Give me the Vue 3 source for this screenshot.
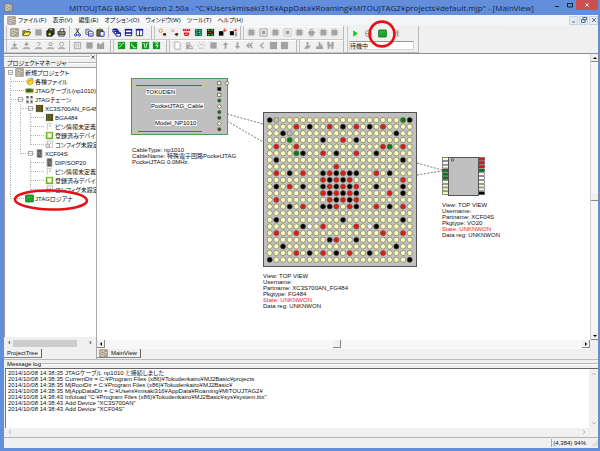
<script setup>
const menus = ['ファイル(F)', '表示(V)', '編集(E)', 'オプション(O)', 'ウィンドウ(W)', 'ツール(T)', 'ヘルプ(H)']

/* Icon artwork, drawn on a 10 x 10 grid */
const G = '#a2a2a2'
const chipBody = (inner) =>
  `<path d="M2.5 0.5v9M4.5 0.5v9M6.5 0.5v9M0.5 3h9M0.5 5h9M0.5 7h9" stroke="#c6c6c6" fill="none"/><rect x="2" y="2" width="6" height="6" fill="${G}"/>${inner}`
const greenBox = (inner) => `<rect x="1" y="1" width="8" height="8" fill="#0a9a18"/><g stroke="#c8f5c0" fill="none">${inner}</g>`
const stamp = (top) => `<g fill="${G}" stroke="${G}"><path d="M1 8.5h8" /><path d="M2 7h6v1H2z" stroke="none"/>${top}</g>`
const board = (bg, a, b) =>
  `<rect x="1" y="1" width="8" height="8" fill="${bg}" stroke="#77705f"/><path d="M2.5 3.5h2M6 2.5h2M3 6.5h2M6.5 5.5h2" stroke="${a}" fill="none"/><path d="M4.500 4.500h2M2 5.500h1M5.500 7.500h2" stroke="${b}" fill="none"/>`

const icons = {
  project: board('#e4ddcf', '#8a5f4c', '#4f7358'),
  open: '<path d="M1 8V3h3l1 1h3v1" fill="#c9b000" stroke="#4a4200" stroke-width=".8"/><path d="M1 8.500l2-4h6.500l-2 4z" fill="#fff04a" stroke="#3a3600" stroke-width=".8"/><path d="M6 2q1.500-1.500 3 .5" stroke="#222" fill="none" stroke-width=".7"/>',
  block: `<rect x="1.500" y="1.500" width="7" height="7" fill="${G}"/>`,
  saveAll: '<path d="M3 1h6v6H3z" fill="#626200" stroke="#111"/><path d="M1 3h6v6H1z" fill="#444800" stroke="#111"/><path d="M3 6h2v2H3z" fill="#fff"/><path d="M4 2h3" stroke="#eee"/>',
  print: '<path d="M3 4l1-3h4L7 4" fill="#fff" stroke="#222" stroke-width=".8"/><path d="M1 4h8v3H1z" fill="#8a8a8a" stroke="#222" stroke-width=".8"/><path d="M2 7h6v2H2z" fill="#ddd" stroke="#222" stroke-width=".8"/><path d="M6 6h1" stroke="#ee0"/>',
  cut: '<path d="M3.500 0.500L6.500 6M6.500 0.500L3.500 6" stroke="#223" fill="none"/><g fill="none" stroke="#18249c"><circle cx="3" cy="7.700" r="1.300"/><circle cx="7" cy="7.700" r="1.300"/></g>',
  copy: '<path d="M1 1.500h3.500l1 1V7H1z" fill="#fff" stroke="#333a80" stroke-width=".9"/><path d="M4 3.500h4l1 1V9H4z" fill="#fff" stroke="#10189c" stroke-width=".9"/><path d="M2 3.500h1.500M2 5h1.500M5 6h3M5 7.500h3" stroke="#445" stroke-width=".6"/>',
  paste: '<path d="M1 2h6.500v7H1z" fill="#77743a" stroke="#222" stroke-width=".9"/><path d="M3 1h2.500v1.500H3z" fill="#ee0" stroke="#222" stroke-width=".6"/><path d="M4.500 4h4.500v5H4.500z" fill="#fff" stroke="#10189c" stroke-width=".9"/>',
  cascade: '<g fill="#fff" stroke="#08128c"><path d="M1 1.500h5v3H1z"/><path d="M2.500 3.500h5v3h-5z"/><path d="M4.500 5.500h5v3.500h-5z"/></g><path d="M1 1.500h5M2.500 3.500h5M4.500 5.700h5" stroke="#08128c" stroke-width="1.500"/>',
  tileH: '<path d="M1.500 1.500h7v7h-7z" fill="#fff" stroke="#08128c"/><path d="M1 2h8M1 5.500h8" stroke="#08128c" stroke-width="1.500"/>',
  tileV: '<path d="M1.500 1.500h7v7h-7zM5 1.500v7" fill="#fff" stroke="#08128c" stroke-width=".9"/><path d="M1 2h8" stroke="#08128c" stroke-width="1.500"/>',
  link: '<circle cx="3" cy="3" r="1.800" fill="#fff" stroke="#ff6820"/><path d="M5 7l2-1.500 2 .5v2L7 9z" fill="#222"/><path d="M6 8.500L8 9" stroke="#cc0"/>',
  unlink: '<path d="M1.500 1.500l3 3M4.500 1.500l-3 3" stroke="#ff8050"/><path d="M5 7l2-1.500 2 .5v2L7 9z" fill="#222"/><path d="M6 8.500L8 9" stroke="#cc0"/>',
  reset: '<path d="M1 1h8v2.500H1z" fill="#e5141d"/><path d="M2 2h1M4.500 2h1M7 2h1" stroke="#fff"/><path d="M2 5h6v1.500L7 9H3L2 6.500z" fill="#e5141d"/><path d="M3.500 7h3" stroke="#fff" stroke-width=".7"/>',
  scanA: '<path d="M1 1h8v8H1z" fill="#08813c"/><path d="M2 2.500h2M5.500 3h2M3 5h4M2 7h2M6 7.500h2" stroke="#8bcdf2"/><path d="M4.500 2v6" stroke="#062f20"/>',
  scanB: '<path d="M1 1h8v8H1z" fill="#13300f"/><path d="M2 2.500h2M6 2.500h2M2 7.500h2M6 7.500h2" stroke="#44c82c" stroke-width="1.500"/><path d="M4 5h2M2 5h1" stroke="#c83c28"/>',
  addChip: '<path d="M1 3.500h5V8.500H1z" fill="#090909"/><path d="M7.500 0.500v4M5.500 2.500h4" stroke="#e22"/>',
  moveChip: '<path d="M1 3.500h4.500V8H1z" fill="#090909"/><path d="M5 2.500h4M7.500 1v3" stroke="#e22"/><path d="M6.500 5.500h2.500M6.500 7h2.500M6.500 8.700h2.500" stroke="#777"/>',
  chip: chipBody(''),
  chipFrame: `<path d="M1 1h8v8H1z" stroke="${G}" fill="none"/><path d="M3 3h4v4H3z" fill="${G}"/>`,
  chipDot: `<path d="M1 1h8v8H1z" stroke="${G}" stroke-dasharray="1 1" fill="none"/><path d="M3 3h4v4H3z" fill="${G}"/>`,
  chipTall: `<path d="M2 3h6v5H2z" fill="${G}"/><path d="M3 1.500h4M1 5h8M3 9h4" stroke="${G}"/>`,
  down: stamp('<path d="M5 1v3M3 4h4L5 6.500z"/>'),
  up: stamp('<path d="M5 6V3M3 4h4L5 1.500z"/>'),
  ask: stamp('<path d="M3 2.500q2-2 4 0q0 1.500-2 2v1.500" fill="none"/>'),
  ring: stamp('<path d="M3.500 2h3v3h-3z" fill="none"/>'),
  oval: stamp('<circle cx="5" cy="3.500" r="2.200" fill="none"/>'),
  sheet: `<path d="M1.500 1.500h7v7h-7z" stroke="${G}" fill="none"/><path d="M3 3.500h4M3 5.500h4M3.500 3v5M6 3v5" stroke="#bbb" stroke-width=".7"/>`,
  folder: `<path d="M1 3l2-1 2 2 3-3 1 1v7H1z" fill="${G}"/>`,
  waveA: greenBox('<path d="M2 7l2-1 1-2 3-2M2 3h2"/>'),
  waveB: greenBox('<path d="M3 2.500v3h2v2h3"/>'),
  waveC: greenBox('<path d="M2 3h2v4h2V3h2"/>'),
  waveD: greenBox('<path d="M3 2h4L4 5h3L5 8"/>'),
  page: `<path d="M2 1h4l2 2v6H2z" fill="#fff" stroke="${G}" stroke-width=".9"/>`,
  steps: `<path d="M1 8.500h8M2 8V2h3v2h1v2h2v2" stroke="${G}" fill="none"/><path d="M2 4h3v4H2z" fill="${G}"/>`,
  gear: `<path d="M2 2h1M7 2h1M1 5h1M8 5h1M4 4h2M2 8h1M4 8h2M7 8h1" stroke="${G}"/>`,
  arrowUp: `<path d="M5 1L8 4.500H6V8.500H4V4.500H2z" fill="${G}"/>`,
  arrowDown: `<path d="M5 9L2 5.500h2V1.500h2v4h2z" fill="${G}"/>`,
  left2: `<path d="M5 2L2 5l3 3M8.500 2L5 5l3.500 3M2 5h6" stroke="${G}" stroke-width="1.300" fill="none"/>`,
  left1: `<path d="M7.500 2L3.500 5l4 3" stroke="${G}" stroke-width="1.400" fill="none"/>`,
  big: `<path d="M1 1h8v8H1z" fill="${G}"/>`,
  bootA: `<path d="M4 1h2v4h3L6 8.500H1L4 5z" fill="${G}"/>`,
  bootB: `<path d="M4 1h2v3h2v2h1v3H1V6h3z" fill="${G}"/>`,
  bootC: `<path d="M1.500 1H4v3h2V1h2.500v3L8 9H6V6H4v3H2L1.500 4z" fill="${G}"/>`,
  play: '<path d="M2.500 1.500L7.500 5l-5 3.500z" fill="#12c421"/>',
  stop: `<circle cx="5" cy="5" r="3.300" fill="none" stroke="${G}" stroke-width="1.300"/><path d="M2.500 5h5" stroke="${G}"/>`,
  analyzer: '<path d="M0.500 2q0-1 1-1h7q1 0 1 1v6q0 1-1 1h-7q-1 0-1-1z" fill="#1ea02c" stroke="#12751d" stroke-width=".8"/><path d="M2 3.500h6" stroke="#53c95b" stroke-width=".7"/>',
  bars: '<path d="M2 1h6v8H2z" fill="#cfcfcf"/><path d="M6 2v6M4 4h3" stroke="#999"/>',
  files: '<path d="M1 5l4-4 2 2-2 4z" fill="#ffe14a" stroke="#a87d00" stroke-width=".6"/><path d="M3 8l1-4 5-1v4L5 9z" fill="#ffd21d" stroke="#a87d00" stroke-width=".6"/><path d="M6 1.500h2.500v2" fill="none" stroke="#7892c8"/>',
  cable: '<path d="M0.500 3h9v4h-9z" fill="#6f7d12"/><path d="M2 3h5v4H2z" fill="#2e6a17"/><path d="M1 7.500h8" stroke="#aaa550"/>',
  chain: '<path d="M1.500 1h2.500v2.500H1.500zM6 1h2.500v2.500H6zM1.500 6H4v2.500H1.500zM6 6h2.500v2.500H6z" fill="#555"/><path d="M1 4.500h8M1 9.300h8" stroke="#aaa" stroke-width=".6"/>',
  bga: '<path d="M1 1h8v8H1z" fill="#4c4b16"/><path d="M2 2.500h6M2 4.500h6M2 6.500h6M2 8.200h6" stroke="#b0a654" stroke-dasharray="1 1" stroke-width=".8"/>',
  dip: '<path d="M2 0.500h6v9H2z" fill="#595c57"/><path d="M2 2h1M2 4h1M2 6h1M2 8h1M7 2h1M7 4h1M7 6h1M7 8h1" stroke="#c9d0b8"/><path d="M4 3l2 4" stroke="#999"/>',
  pins: '<path d="M2.500 9V1.500H8M4.500 3.500H7M4.500 5h2" stroke="#bbb" fill="none" stroke-width=".9"/>',
  db: '<path d="M1 1h8v8H1z" fill="#9ed345"/><path d="M3 3h4v4H3z" fill="#fffde5"/><path d="M1.500 1.500h7v7h-7z" fill="none" stroke="#5ca629"/><path d="M2.500 2.500h5" stroke="#e3f5a0"/>',
  config: '<path d="M2.500 1h6v7h-6z" fill="#fff" stroke="#aaa" stroke-width=".8"/><path d="M1 4.500h4v4H1z" fill="#ddd" stroke="#999" stroke-width=".7"/><path d="M4 6l3-3" stroke="#c99"/>'
}

const rowOne = [
  { k: 'file', sets: [['project', 'open', 'block', 'saveAll', 'print'], ['cut', 'copy', 'paste'], ['cascade', 'tileH', 'tileV']] },
  { k: 'scan', sets: [['link', 'unlink', 'reset', 'scanA', 'scanB', 'addChip', 'moveChip']] },
  { k: 'chips', sets: [['chip', 'chipFrame', 'chip', 'chipDot', 'chip', 'chipTall', 'chip', 'chip']] }
]
const rowTwo = [
  { k: 'stamp', sets: [['down', 'up', 'ask', 'ring', 'oval'], ['sheet', 'block', 'folder']] },
  { k: 'wave', sets: [['waveA', 'waveB', 'waveC', 'waveD']] },
  { k: 'edit', sets: [['page', 'steps', 'gear', 'block', 'arrowUp', 'arrowDown', 'left2', 'left1', 'big', 'big']] },
  { k: 'boot', sets: [['bootA', 'bootB', 'bootC']] }
]

/* through: guide columns that run the full row; half: the column that ends here */
const tree = [
  { level: 0, icon: 'project', text: '新規プロジェクト', open: true, through: [], half: -1 },
  { level: 1, icon: 'files', text: '各種ファイル', through: [0], half: -1 },
  { level: 1, icon: 'cable', text: 'JTAGケーブル(np1010)', through: [0], half: -1 },
  { level: 1, icon: 'chain', text: 'JTAGチェーン', open: true, through: [0], half: -1 },
  { level: 2, icon: 'bga', text: 'XC3S700AN_FG484', open: true, through: [0, 1], half: -1 },
  { level: 3, icon: 'bga', text: 'BGA484', through: [0, 1, 2], half: -1 },
  { level: 3, icon: 'pins', text: 'ピン情報未定義', through: [0, 1, 2], half: -1 },
  { level: 3, icon: 'db', text: '登録済みデバイス', through: [0, 1, 2], half: -1 },
  { level: 3, icon: 'config', text: 'コンフィグ未設定', through: [0, 1], half: 2 },
  { level: 2, icon: 'dip', text: 'XCF04S', open: true, through: [0], half: 1 },
  { level: 3, icon: 'dip', text: 'DIP/SOP20', through: [0, 2], half: -1 },
  { level: 3, icon: 'pins', text: 'ピン情報未定義', through: [0, 2], half: -1 },
  { level: 3, icon: 'db', text: '登録済みデバイス', through: [0, 2], half: -1 },
  { level: 3, icon: 'config', text: 'コンフィグ未設定', through: [0], half: 2 },
  { level: 1, icon: 'analyzer', text: 'JTAGロジアナ', through: [], half: 0, marked: true }
]

/* Ball map: k = ground, r = power, g = JTAG, n = unconnected, w = configuration */
const special = {
  0: { k: [0, 21], n: [1], g: [20] },
  1: { r: [4, 9, 13, 17], k: [6, 11, 15] },
  2: { k: [2, 19], n: [3] },
  3: { g: [3], k: [8, 13], r: [11] },
  4: { r: [1, 4, 17, 20], g: [18] },
  5: { g: [4], k: [5, 10, 16], r: [8, 13] },
  6: { k: [1, 20] },
  7: { r: [10] },
  8: { r: [1, 5, 9, 11, 16], k: [3, 8, 10, 12, 13, 18] },
  9: { r: [8, 10, 12, 20], k: [9, 11] },
  10: { k: [1, 5, 8, 10, 12, 16, 20], r: [3, 9, 11, 13] },
  11: { r: [8, 10, 12, 18], k: [9, 11, 13, 20] },
  12: { r: [1, 9, 11, 13], k: [10, 12] },
  13: { k: [3, 8, 9, 13, 18], r: [5, 10, 12, 16, 20] },
  15: { k: [1, 11, 20], w: [7] },
  16: { k: [5, 16], w: [6, 15], r: [8, 13] },
  17: { r: [1, 4, 17, 20] },
  18: { k: [9, 13], r: [10] },
  19: { k: [2, 19] },
  20: { r: [4, 8, 12, 17], k: [6, 10, 15] },
  21: { k: [0, 21] }
}
const fills = { k: '#000', r: '#e01818', g: '#0c7a14', n: '#c0c0c0', w: '#fff', y: '#ffffc4' }
const balls = []
for (let r = 0; r < 22; r++) {
  for (let c = 0; c < 22; c++) {
    const kind = Object.keys(special[r] || {}).find((t) => special[r][t].includes(c)) || 'y'
    balls.push({ id: r * 22 + c, x: 172.7 + (c * 140) / 21, y: 66 + (r * 139.7) / 21, kind })
  }
}

const boardPins = [
  ['s', '#ffffc4'], ['s', '#000'], ['s', '#ffffc4'], ['c', '#1c6b22'], ['d', '#ffffc4'],
  ['c', '#1c6b22'], ['c', '#1c6b22'], ['d', '#ffffc4'], ['c', '#1c6b22']
].map(([shape, fill], i) => ({ shape, fill, y: 29.3 + i * 5.75 }))

const sopLeft = ['#ffffc4', '#fff', '#fff', '#0c7a14', '#0c7a14', '#0c7a14', '#fff', '#ffffc4', '#ffffc4', '#ffffc4']
const sopRight = ['#e01818', '#e01818', '#e01818', '#0c7a14', '#fff', '#fff', '#fff', '#ffffc4', '#fff', '#000']

const captions = [
  { x: 35, y: 98, lines: ['CableType: np1010', 'CableName: 特殊電子回路PocketJTAG', 'PocketJTAG 0.0MHz.'] },
  { x: 166, y: 224, lines: ['View: TOP VIEW', 'Username:', 'Partname: XC3S700AN_FG484', 'Pkgtype: FG484', 'State: UNKNWON', 'Data reg: UNKNWON'] },
  { x: 345, y: 153, lines: ['View: TOP VIEW', 'Username:', 'Partname: XCF04S', 'Pkgtype: VO20', 'State: UNKNWON', 'Data reg: UNKNWON'] }
]

const log = [
  ['2014/10/08 14:38:35', 'JTAGケーブル np1010 と接続しました'],
  ['2014/10/08 14:38:35', 'CurrentDir = C:¥Program Files (x86)¥Tokudenkairo¥MJ2Basic¥projects'],
  ['2014/10/08 14:38:35', 'MjRootDir = C:¥Program Files (x86)¥Tokudenkairo¥MJ2Basic¥'],
  ['2014/10/08 14:38:35', 'MjAppDataDir = C:¥Users¥misaki316¥AppData¥Roaming¥MITOUJTAG2¥'],
  ['2014/10/08 14:38:43', 'Infoload "C:¥Program Files (x86)¥Tokudenkairo¥MJ2Basic¥sys¥system.bix"'],
  ['2014/10/08 14:38:43', 'Add Device "XC3S700AN"'],
  ['2014/10/08 14:38:43', 'Add Device "XCF04S"']
]
</script>

<template>
  <div class="window">
    <header class="titlebar">
      <svg class="icon" viewBox="0 0 10 10" v-html="icons.project"></svg>
      <h1>MITOUJTAG BASIC Version 2.50a - "C:¥Users¥misaki316¥AppData¥Roaming¥MITOUJTAG2¥projects¥default.mjp" - [MainView]</h1>
      <div class="winbtns">
        <button type="button" aria-label="Minimize"><svg viewBox="0 0 8 8"><path d="M2 5.500h4" /></svg></button>
        <button type="button" aria-label="Maximize"><svg viewBox="0 0 8 8"><path d="M1.500 2.500h5v3.500h-5zM1 2.500h6" /></svg></button>
        <button type="button" aria-label="Close" class="close"><svg viewBox="0 0 8 8"><path d="M2.500 2.500l3 3M5.500 2.500l-3 3" /></svg></button>
      </div>
    </header>

    <div class="frame">
      <nav class="menubar">
        <svg class="icon" viewBox="0 0 10 10" v-html="icons.project"></svg>
        <div class="menus">
          <button v-for="m in menus" :key="m" type="button">{{ m }}</button>
        </div>
        <div class="mdibtns">
          <button type="button" aria-label="Minimize view"><svg viewBox="0 0 8 8"><path d="M2 6h3" /></svg></button>
          <button type="button" aria-label="Restore view"><svg viewBox="0 0 8 8"><path d="M3 1.500h3.500V4H3zM1.500 3.500H5V6.500H1.500z" /></svg></button>
          <button type="button" aria-label="Close view"><svg viewBox="0 0 8 8"><path d="M2 2l4 4M6 2L2 6" /></svg></button>
        </div>
      </nav>

      <div class="toolbars">
        <div class="bars">
          <div v-for="(row, ri) in [rowOne, rowTwo]" :key="ri" class="bar-row">
            <div v-for="g in row" :key="g.k" class="group" :class="g.k">
              <div v-for="(set, si) in g.sets" :key="si" class="set">
                <button v-for="(ic, ii) in set" :key="ii" type="button" class="tool" :aria-label="ic">
                  <svg viewBox="0 0 10 10" v-html="icons[ic]"></svg>
                </button>
              </div>
            </div>
          </div>
        </div>
        <div class="run">
          <div class="run-tools">
            <button type="button" class="tool" aria-label="play"><svg viewBox="0 0 10 10" v-html="icons.play"></svg></button>
            <button type="button" class="tool" aria-label="stop"><svg viewBox="0 0 10 10" v-html="icons.stop"></svg></button>
            <button type="button" class="tool marked" aria-label="analyzer">
              <svg viewBox="0 0 10 10" v-html="icons.analyzer"></svg>
              <svg class="ring" viewBox="0 0 28 28"><circle cx="14" cy="14" r="12.400" /></svg>
            </button>
            <button type="button" class="tool" aria-label="bars"><svg viewBox="0 0 10 10" v-html="icons.bars"></svg></button>
          </div>
          <input class="state" type="text" value="待機中" aria-label="status" readonly />
        </div>
      </div>

      <main class="work">
        <aside class="side">
          <div class="grip"><i></i><button type="button" aria-label="Close panel"><svg viewBox="0 0 6 6"><path d="M1.500 1.500l3 3M4.500 1.500l-3 3" /></svg></button></div>
          <div class="caption"><span>プロジェクトマネージャ</span><i></i></div>
          <ul class="tree">
            <li v-for="(n, i) in tree" :key="i">
              <svg class="guide" :width="9 + n.level * 10" height="9">
                <g class="dots">
                  <path v-for="c in n.through" :key="c" :d="`M${4.5 + c * 10} 0v9`" />
                  <path v-if="n.half >= 0" :d="`M${4.5 + n.half * 10} 0v5`" />
                  <path v-if="n.level" :d="`M${n.level * 10 - 5} 4.500h${n.open ? 14 : 13}`" />
                </g>
                <g v-if="n.open" class="box">
                  <rect :x="2.5 + n.level * 10" y="2.500" width="4" height="4" />
                  <path :d="`M${3.5 + n.level * 10} 4.500h2`" />
                </g>
              </svg>
              <svg class="icon" viewBox="0 0 10 10" v-html="icons[n.icon]"></svg>
              <span>{{ n.text }}</span>
              <svg v-if="n.marked" class="oval" viewBox="0 0 76 24"><ellipse cx="38" cy="12" rx="36" ry="9.500" transform="rotate(1 38 12)" /></svg>
            </li>
          </ul>
          <div class="flat-scroll"><b>‹</b><i></i><b>›</b></div>
          <div class="tabs"><button type="button" class="tab">ProjectTree</button></div>
        </aside>

        <section class="view">
          <div class="stage">
            <div class="canvas">
              <svg class="drawing">
                <g class="wires">
                  <path d="M130 60L166 70M130 67L166 88M320 109L345 116M320 121L345 117" />
                </g>

                <rect class="pcb" x="34.500" y="24.500" width="96" height="56" />
                <path class="silk" d="M39 31.500h66M41 77.500h64" />
                <path class="faint" d="M42 73.500h58" />
                <g class="plates">
                  <rect x="49" y="35" width="30" height="6" />
                  <rect x="54" y="49" width="53" height="6" />
                  <rect x="58" y="66" width="42" height="6" />
                </g>
                <g class="note">
                  <text x="49" y="40">TOKUDEN</text>
                  <text x="54" y="54">PocketJTAG_Cable</text>
                  <text x="58" y="71">Model_NP1010</text>
                </g>
                <g class="pads">
                  <template v-for="(p, i) in boardPins" :key="i">
                    <rect v-if="p.shape === 's'" x="120.700" :y="p.y - 1.6" width="3.200" height="3.200" :fill="p.fill" />
                    <circle v-else-if="p.shape === 'c'" cx="122.300" :cy="p.y" r="1.600" :fill="p.fill" />
                    <path v-else :d="`M122.300 ${p.y - 2}l2 2l-2 2l-2-2z`" :fill="p.fill" />
                  </template>
                  <circle cx="130" cy="29.300" r="1.700" fill="#ffffc4" />
                </g>

                <rect class="body" x="166.500" y="58.500" width="153" height="154" />
                <circle v-for="b in balls" :key="b.id" class="ball" :cx="b.x" :cy="b.y" r="2.600" :fill="fills[b.kind]" />

                <g class="pads">
                  <rect v-for="(f, i) in sopLeft" :key="'l' + i" x="345.500" :y="103.6 + i * 3.8" width="6" height="2.800" :fill="f" />
                  <rect v-for="(f, i) in sopRight" :key="'r' + i" x="381.500" :y="103.6 + i * 3.8" width="6" height="2.800" :fill="f" />
                </g>
                <rect class="body" x="351.500" y="103.500" width="30" height="38" />
                <circle class="mark" cx="355.500" cy="106" r="1.200" />

                <g v-for="cap in captions" :key="cap.x" class="note">
                  <text v-for="(t, i) in cap.lines" :key="t" :x="cap.x" :y="cap.y + i * 6" :class="{ alert: t.startsWith('State') }">{{ t }}</text>
                </g>
              </svg>
            </div>
            <div class="vscroll">
              <button type="button" aria-label="Scroll up"><svg viewBox="0 0 6 6"><path d="M1 4h4L3 2z" /></svg></button>
              <i class="thumb"></i>
              <button type="button" aria-label="Scroll down"><svg viewBox="0 0 6 6"><path d="M1 2h4L3 4z" /></svg></button>
            </div>
          </div>
          <div class="hscroll">
            <button type="button" aria-label="Scroll left"><svg viewBox="0 0 6 6"><path d="M4 1v4L2 3z" /></svg></button>
            <i class="before"></i><i class="thumb"></i><i class="after"></i>
            <button type="button" aria-label="Scroll right"><svg viewBox="0 0 6 6"><path d="M2 1v4l2-2z" /></svg></button>
            <i class="corner"></i>
          </div>
          <div class="tabs"><button type="button" class="tab"><svg class="icon" viewBox="0 0 10 10" v-html="icons.project"></svg>MainView</button></div>
        </section>
      </main>

      <section class="messages">
        <div class="caption"><span>Message log</span><i></i></div>
        <div class="logbox">
          <div class="log">
            <p v-for="(l, i) in log" :key="i"><time>{{ l[0] }}</time><span>{{ l[1] }}</span></p>
          </div>
          <div class="log-v"><svg viewBox="0 0 6 6"><path d="M1 4l2-2 2 2" /></svg><svg viewBox="0 0 6 6"><path d="M1 2l2 2 2-2" /></svg></div>
        </div>
        <div class="log-h"><svg viewBox="0 0 6 6"><path d="M4 1L2 3l2 2" /></svg><svg viewBox="0 0 6 6"><path d="M2 1l2 2-2 2" /></svg></div>
      </section>

      <footer class="status">
        <span>(4,384) 94%</span>
        <svg viewBox="0 0 8 8"><path d="M1 8l7-7M4 8l4-4M7 8l1-1" /></svg>
      </footer>
    </div>
  </div>
</template>

<style>
body {
  margin: 0;
}
</style>

<style scoped>
* {
  box-sizing: border-box;
}
.window {
  display: flex;
  flex-direction: column;
  height: 100vh;
  padding: 0 2px 3px 4px;
  background: #638edb;
  color: #111;
  font-family: 'Liberation Sans', 'Noto Sans CJK JP', sans-serif;
  font-feature-settings: 'palt';
  font-size: 6px;
  line-height: 8px;
  overflow: hidden;
}
button {
  border: 0;
  padding: 0;
  margin: 0;
  background: none;
  font: inherit;
  color: inherit;
  display: flex;
  align-items: center;
  justify-content: center;
}
svg {
  display: block;
  flex: none;
}
.icon {
  width: 9px;
  height: 9px;
}
.titlebar {
  display: flex;
  height: 15px;
  flex: none;
}
.titlebar .icon {
  margin: 3px 0 0;
}
h1 {
  flex: 1;
  margin: 0;
  padding-left: 40px;
  text-align: center;
  font: 400 8px/16px 'Open Sans', 'Noto Sans CJK JP', sans-serif;
  color: #15254a;
  white-space: nowrap;
}
.winbtns {
  display: flex;
}
.winbtns button {
  width: 13px;
  height: 10px;
}
.winbtns .close {
  width: 22px;
  background: #c9504f;
}
.winbtns svg,
.mdibtns svg {
  width: 8px;
  height: 8px;
  fill: none;
  stroke: #1a2440;
}
.winbtns .close svg {
  stroke: #fff;
}
.frame {
  flex: 1;
  min-height: 0;
  display: flex;
  flex-direction: column;
  background: #f0f0f0;
}
.menubar {
  display: flex;
  align-items: center;
  height: 10px;
  flex: none;
  padding: 0 0 0 3px;
  background: linear-gradient(90deg, #f8f9fb, #f3f4f6);
}
.menus {
  flex: 1;
  display: flex;
  gap: 6px;
  padding-left: 2px;
}
.menus button {
  white-space: nowrap;
}
.mdibtns {
  display: flex;
  gap: 1px;
}
.mdibtns button {
  width: 9px;
  height: 9px;
  background: #e4ecf7;
  border: 1px solid #c4d2e6;
}
.mdibtns svg {
  stroke: #5b6b84;
}
.toolbars {
  display: flex;
  height: 29px;
  flex: none;
  border-bottom: 1px solid #8e8e8e;
  padding-top: 1px;
}
.bars {
  width: 340px;
  display: flex;
  flex-direction: column;
}
.bar-row {
  flex: 1;
  display: flex;
}
.group {
  display: flex;
  align-items: center;
  padding: 0 2px 0 5px;
  border-right: 1px solid #b9b9b9;
  border-bottom: 1px solid #c9c9c9;
  box-shadow: inset 2px 0 #f0f0f0, inset 3px 0 #c0c0c0, inset 0 1px #fff;
}
.file {
  width: 148px;
}
.scan {
  width: 89px;
}
.chips {
  flex: 1;
}
.stamp {
  width: 107px;
}
.wave {
  width: 56px;
}
.edit {
  width: 130px;
}
.boot {
  flex: 1;
}
.set {
  display: flex;
}
.set + .set {
  border-left: 1px solid #bdbdbd;
  margin-left: 2px;
  padding-left: 2px;
}
.tool {
  width: 12px;
  height: 12px;
}
.set .tool:first-child,
.set .tool:last-child {
  width: 11px;
}
.tool > svg {
  width: 9px;
  height: 9px;
}
.run {
  width: 75px;
  padding: 0 4px 2px 5px;
  border-right: 1px solid #b9b9b9;
  border-bottom: 1px solid #b9b9b9;
  box-shadow: inset 3px 0 #f0f0f0, inset 4px 0 #c8c8c8;
}
.run-tools {
  display: flex;
  align-items: center;
  gap: 1px;
  height: 15px;
}
.marked {
  position: relative;
}
.run-tools .marked {
  width: 14px;
}
.tool > .ring {
  position: absolute;
  z-index: 2;
  left: -7px;
  top: -8px;
  width: 28px;
  height: 28px;
}
.ring,
.oval {
  fill: none;
  stroke: #e60f16;
  stroke-width: 2.600px;
  pointer-events: none;
}
.state {
  display: block;
  width: 100%;
  height: 9px;
  border: 1px solid #d5d5d5;
  border-top-color: #999;
  padding: 0;
  background: #fff;
  color: #111;
  font: inherit;
}
.work {
  flex: 1;
  min-height: 0;
  display: flex;
}
.side {
  width: 93px;
  display: flex;
  flex-direction: column;
  border-right: 1px solid #a9a9a9;
}
.grip {
  display: flex;
  align-items: center;
  height: 5px;
  flex: none;
}
.grip i,
.caption i {
  flex: 1;
  height: 2px;
  border-top: 1px solid #b4b4b4;
  border-bottom: 1px solid #fff;
}
.grip button {
  width: 6px;
  height: 5px;
}
.grip svg {
  width: 6px;
  height: 6px;
  stroke: #333;
  stroke-width: 0.800px;
}
.caption {
  display: flex;
  align-items: center;
  gap: 1px;
  height: 8px;
  flex: none;
  padding-left: 3px;
  white-space: nowrap;
}
.tree {
  flex: 1;
  min-height: 0;
  list-style: none;
  margin: 0;
  padding: 0 0 0 1px;
  background: #fff;
  border-left: 1px solid #999;
  border-top: 1px solid #999;
  overflow: hidden;
}
.tree li {
  position: relative;
  display: flex;
  align-items: center;
  height: 9px;
  white-space: nowrap;
}
.tree .icon {
  margin-right: 1px;
}
.dots {
  fill: none;
  stroke: #b5b5b5;
  stroke-dasharray: 1 1;
}
.box {
  fill: #fff;
  stroke: #979797;
  stroke-width: 0.800px;
}
.oval {
  position: absolute;
  z-index: 2;
  left: 7px;
  top: -6px;
  width: 76px;
  height: 24px;
}
.flat-scroll {
  display: flex;
  align-items: center;
  height: 12px;
  flex: none;
  padding: 0 4px;
  gap: 2px;
}
.flat-scroll b {
  width: 3px;
  font-size: 8px;
  color: #555;
}
.flat-scroll i {
  width: 64px;
  height: 7px;
  margin-right: auto;
  background: #cdcdcd;
}
.tabs {
  display: flex;
  height: 10px;
  flex: none;
}
.tab {
  height: 9px;
  padding: 0 3px;
  gap: 3px;
  border-right: 1px solid #666;
  border-bottom: 1px solid #888;
}
.view {
  flex: 1;
  min-width: 0;
  display: flex;
  flex-direction: column;
}
.view .tab {
  padding: 0 3px 0 2px;
}
.stage {
  flex: 1;
  min-height: 0;
  display: flex;
}
.canvas {
  flex: 1;
  min-width: 0;
  background: #fff;
}
.drawing {
  width: 100%;
  height: 100%;
}
.vscroll {
  width: 8px;
  display: flex;
  flex-direction: column;
  justify-content: space-between;
  background: #f7f7f7;
  border-left: 1px solid #d0d0d0;
}
.hscroll {
  height: 9px;
  flex: none;
  display: flex;
  background: #f7f7f7;
}
.vscroll button,
.hscroll button,
.thumb {
  width: 8px;
  height: 8px;
  background: #f0f0f0;
  border-right: 1px solid #8a8a8a;
  border-bottom: 1px solid #8a8a8a;
}
.vscroll button svg,
.hscroll button svg {
  width: 6px;
  height: 6px;
}
.before {
  flex: 228;
}
.after {
  flex: 241;
}
.corner {
  width: 8px;
  background: #f0f0f0;
}
.wires {
  fill: none;
  stroke: #555;
  stroke-width: 0.800px;
  stroke-dasharray: 2 1.500;
}
.pcb {
  fill: #c0c0c0;
  stroke: #4f9a51;
}
.silk {
  stroke: #4a58e0;
}
.faint {
  stroke: #cdb6c9;
  stroke-width: 0.600px;
}
.plates {
  fill: #f4f4f4;
}
.pads {
  stroke: #444;
  stroke-width: 0.600px;
}
.body {
  fill: #c0c0c0;
  stroke: #555;
}
.ball {
  stroke: #66664a;
  stroke-width: 0.600px;
}
.mark {
  fill: none;
  stroke: #333;
  stroke-width: 0.700px;
}
.note {
  font-size: 6px;
  fill: #111;
}
.note .alert {
  fill: #f02020;
}
.messages {
  flex: none;
  display: flex;
  flex-direction: column;
  border-top: 1px solid #bcbcbc;
}
.logbox {
  height: 60px;
  display: flex;
  margin-left: 1px;
  border-top: 1px solid #666;
  border-left: 1px solid #777;
}
.log {
  flex: 1;
  background: #fff;
  padding: 1px 2px;
}
.log p {
  display: flex;
  gap: 2px;
  margin: 0;
  line-height: 6px;
  white-space: nowrap;
}
.log-v {
  width: 9px;
  display: flex;
  flex-direction: column;
  justify-content: space-between;
  align-items: center;
  padding: 2px 0;
}
.log-h {
  display: flex;
  justify-content: space-between;
  height: 9px;
  padding: 1px 11px 0 3px;
}
.log-v svg,
.log-h svg {
  width: 6px;
  height: 6px;
  fill: none;
  stroke: #aaa;
  stroke-width: 0.800px;
}
.status {
  display: flex;
  justify-content: flex-end;
  align-items: center;
  gap: 5px;
  height: 11px;
  flex: none;
  border-top: 1px solid #b4b4b4;
}
.status span {
  padding-left: 1px;
  border-left: 1px solid #aaa;
}
.status svg {
  width: 7px;
  height: 8px;
  stroke: #aaa;
  stroke-width: 0.700px;
}
</style>
